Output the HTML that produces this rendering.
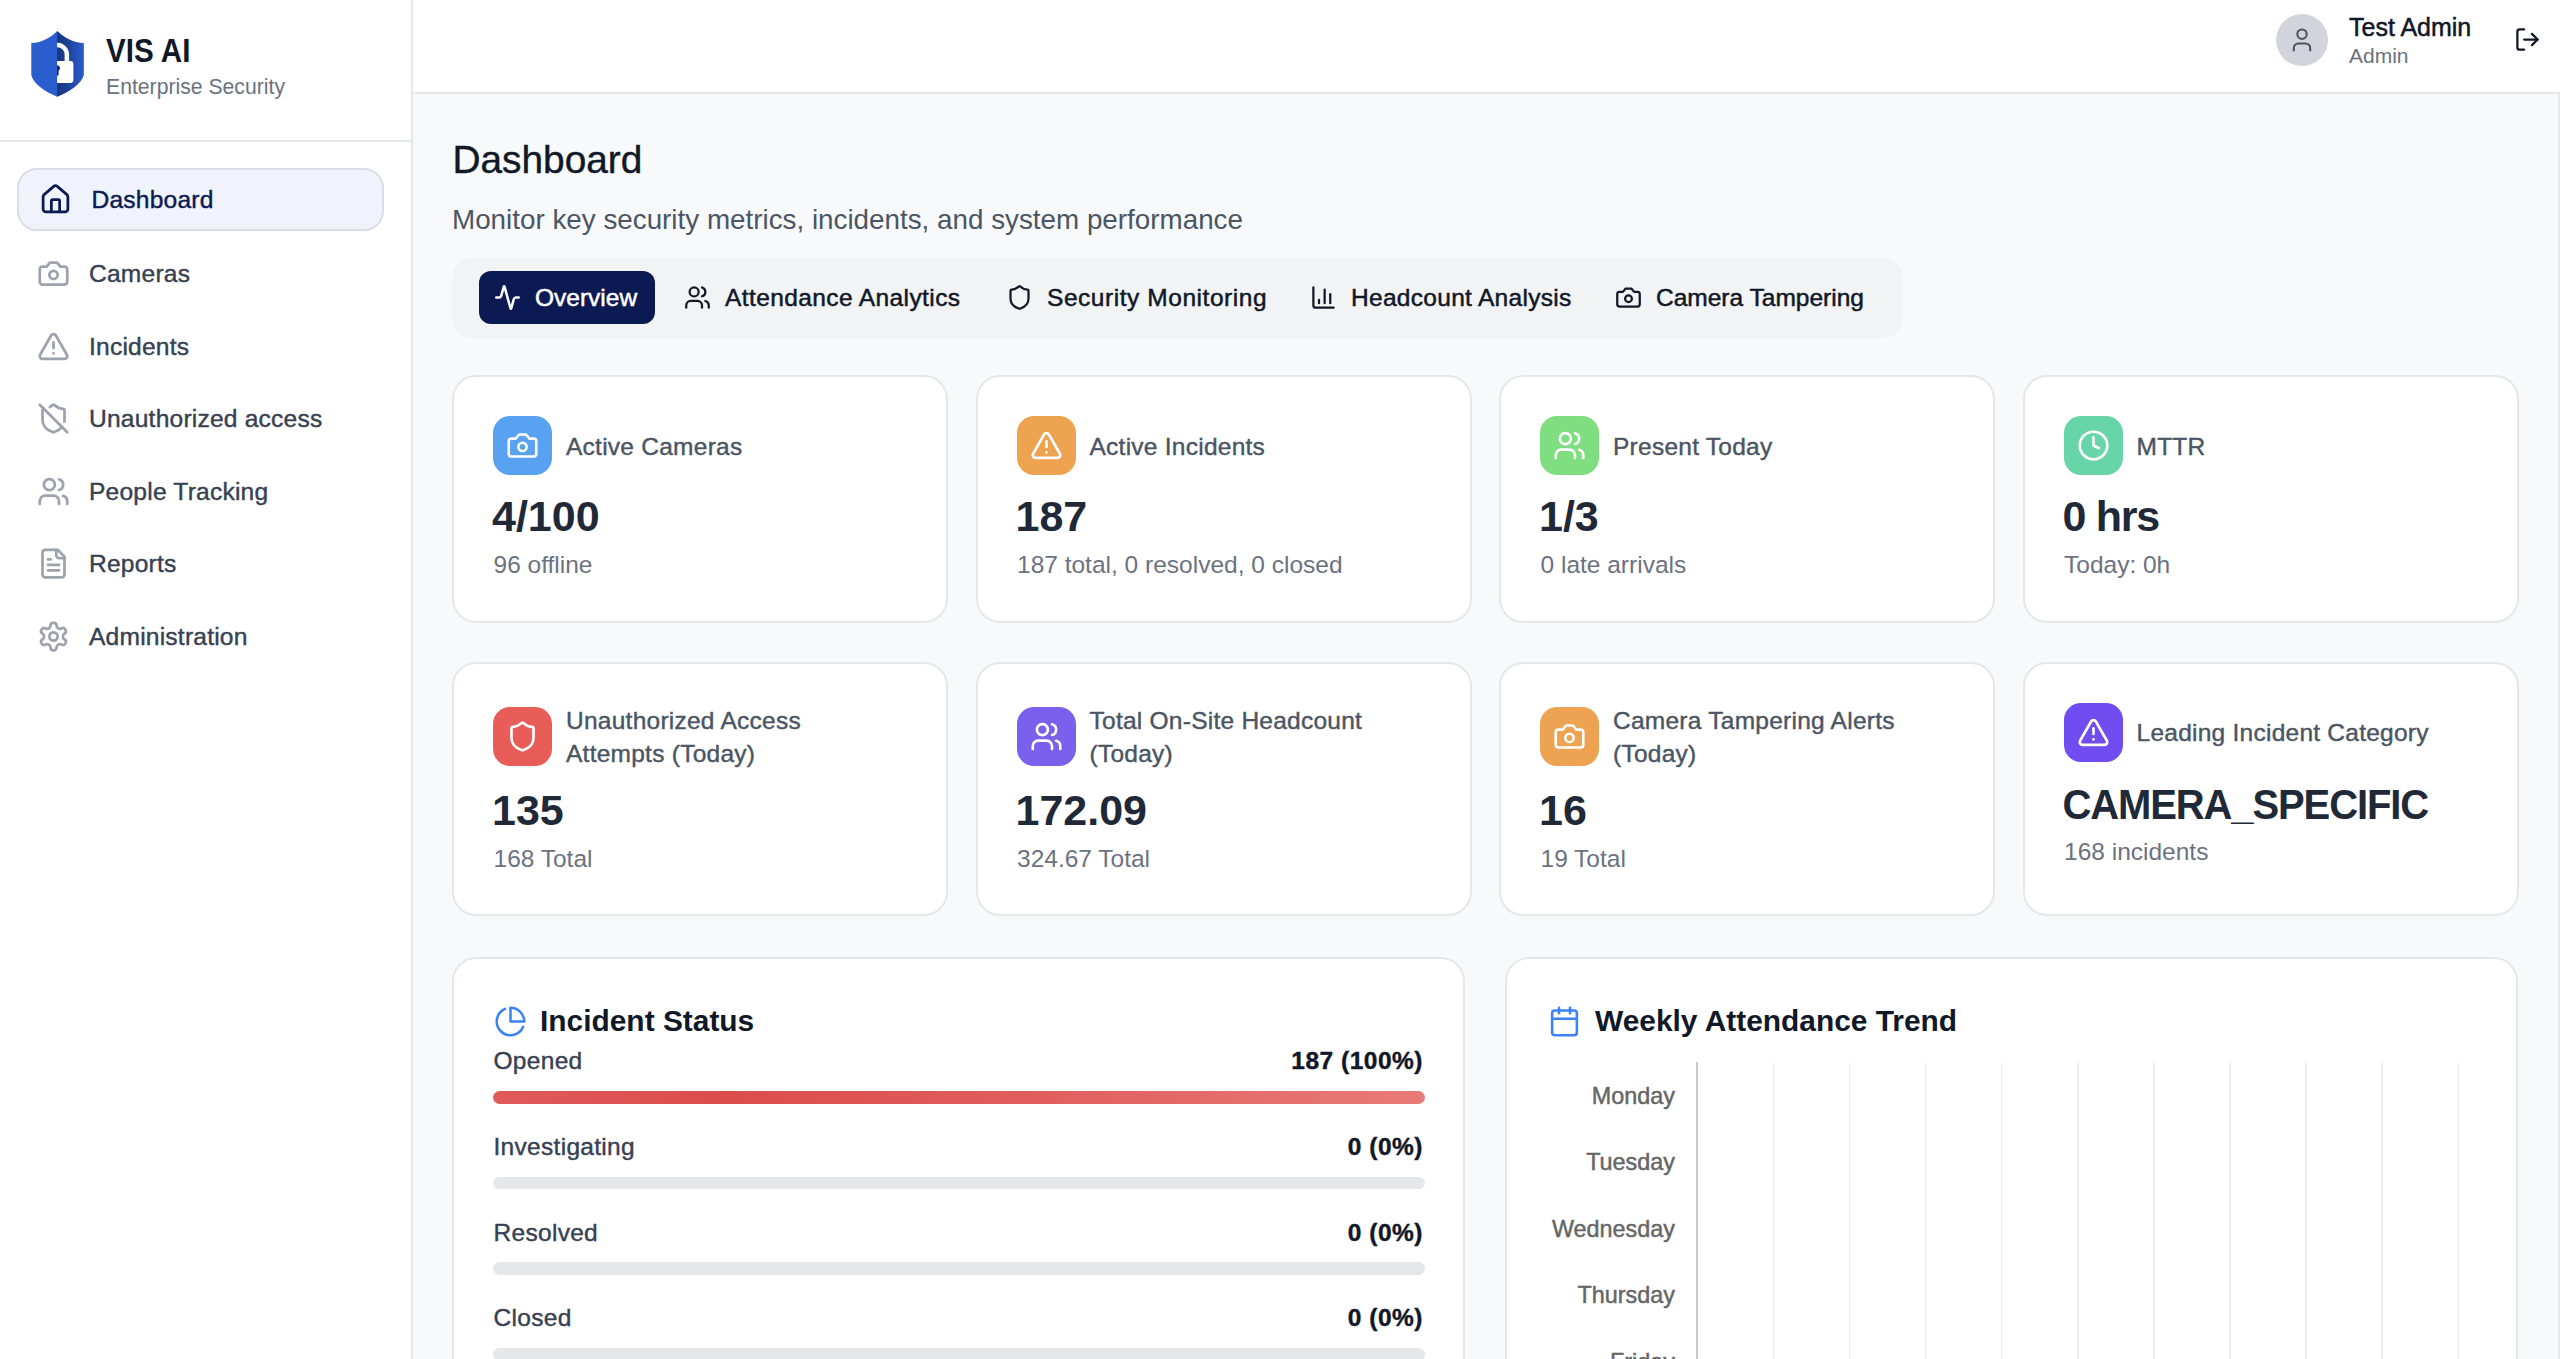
<!DOCTYPE html>
<html><head><meta charset="utf-8">
<style>
*{box-sizing:border-box;margin:0;padding:0}
html,body{width:2560px;height:1359px;overflow:hidden;background:#f8f9fb;font-family:"Liberation Sans",sans-serif;font-variant-ligatures:none}
.abs{position:absolute}
svg{display:block}
.ln{fill:none;stroke:currentColor;stroke-width:2;stroke-linecap:round;stroke-linejoin:round}
.med{-webkit-text-stroke:0.42px currentColor}
#side{position:absolute;left:0;top:0;width:413px;height:1359px;background:#fff;border-right:2px solid #e5e7eb}
#logo{position:absolute;left:0;top:0;width:411.2px;height:142px;border-bottom:2px solid #e5e7eb}
.nav{position:absolute;left:17px;width:366px;height:62px;border-radius:20px;color:#374151}
.nav.act{background:#f0f3fc;border:2px solid #d9dde6;color:#0b1a52;left:16.5px;width:367px;height:62.5px}
.nav svg{position:absolute;left:20px;top:14px;width:33px;height:33px;color:#9ca3af}
.nav.act svg{color:#0b1a52;left:20.5px;top:12.5px}
.nav span{position:absolute;left:72px;top:0;line-height:62px;font-size:24.6px;white-space:nowrap;letter-spacing:0.2px}
#hdr{position:absolute;left:413px;top:0;width:2147px;height:93.5px;background:#fff;border-bottom:2px solid #e5e7eb}
#sb{position:absolute;left:2558px;top:93.5px;width:2px;height:1266px;background:#e8e8e8}

#tabs{position:absolute;left:452px;top:257.5px;width:1451px;height:80px;border-radius:20px;background:#f2f3f5}
.tab{position:absolute;top:271px;height:53px;color:#111827;font-size:24.5px;white-space:nowrap}
.tab svg{position:absolute;top:13px;width:27px;height:27px}
.tab span{position:absolute;top:0;line-height:53px;-webkit-text-stroke:0.5px currentColor}
.tab.act{background:#0b1a52;border-radius:12px;color:#fff}
.card{position:absolute;background:#fff;border:2px solid #e6e7eb;border-radius:24px;width:496px}
.ib{position:absolute;left:39px;width:59px;height:59px;border-radius:17px}
.ib svg{position:absolute;left:13px;top:13px;width:33px;height:33px;color:#fff;stroke-width:1.9}
.lbl{position:absolute;left:112px;font-size:24.5px;line-height:33.5px;color:#4b5563;white-space:nowrap;letter-spacing:0.25px}
.val{position:absolute;left:38px;font-size:43px;line-height:60px;font-weight:bold;color:#1f2937;white-space:nowrap}
.sub{position:absolute;left:39.5px;font-size:24.5px;line-height:34px;color:#6b7280;white-space:nowrap}
.panel{position:absolute;top:957px;height:500px;background:#fff;border:2px solid #e6e7eb;border-radius:24px;width:1013px}
.ptitle{position:absolute;left:86px;top:42px;font-size:29.9px;line-height:40px;font-weight:bold;color:#111827;white-space:nowrap}
.pic{position:absolute;left:40px;top:46px;width:33px;height:33px;color:#3b82f6;stroke-width:1.85}
.srow{position:absolute;left:38px;width:931px}
.srow .l{position:absolute;left:1.5px;top:0;font-size:24.5px;line-height:34px;color:#374151;letter-spacing:0.3px}
.srow .r{position:absolute;right:0;top:0;font-size:24.5px;line-height:34px;color:#111827;font-weight:bold;letter-spacing:0.5px}
.srow .bar{position:absolute;left:1px;top:46.5px;width:931.5px;height:12.8px;border-radius:7px;background:#e5e7eb}
.day{position:absolute;right:0;font-family:"Liberation Sans",sans-serif;font-size:23.4px;-webkit-text-stroke:0.45px #666;color:#666;white-space:nowrap;line-height:30px}
</style></head><body>
<div id="side">
  <div id="logo">
    <svg class="abs" style="left:26px;top:26px" width="64" height="76" viewBox="26 26 64 76">
      <defs><linearGradient id="sg" x1="0" x2="1" y1="0" y2="0"><stop offset="0" stop-color="#17377f"/><stop offset=".35" stop-color="#1c3f93"/><stop offset="1" stop-color="#2b5dd0"/></linearGradient></defs>
      <path d="M57.3 31 C51 37,42 43.1,31.3 43.1 L31.3 75 C33 84,46 92,57.3 96.8 C68.6 92,81.6 84,83.6 75 L83.6 43.1 C72.6 43.1,63.6 37,57.3 31 Z" fill="#2a5dcd"/>
      <path d="M57.1 31.2 C63.6 37,72.6 43.1,83.6 43.1 L83.6 75 C81.6 84,68.6 92,57.1 96.6 Z" fill="url(#sg)"/>
      <path d="M57.1 42.8 A11.8 11.8 0 0 1 69.1 54.6 L69.1 61.5 L64.6 61.5 L64.6 54.6 A7.3 7.3 0 0 0 57.1 47.3 Z" fill="#fff"/>
      <path d="M57.1 61 L70.4 61 A3 3 0 0 1 73.4 64 L73.4 80.1 A3 3 0 0 1 70.4 83.1 L57.1 83.1 Z" fill="#fff"/>
      <path d="M57 65.2 A3 3 0 0 1 59.4 70 L58.6 71 L58.6 75.5 L57 75.5 Z" fill="#10296b"/>
    </svg>
    <div class="abs" style="left:106px;top:31.5px;font-size:29.6px;line-height:40px;font-weight:bold;color:#111827;transform:scaleY(1.12);transform-origin:0 32px">VIS AI</div>
    <div class="abs" style="left:106px;top:73px;font-size:21.2px;line-height:28px;color:#6b7280">Enterprise Security</div>
  </div>
  <div class="nav act" style="top:168px">
    <svg viewBox="0 0 24 24" class="ln"><path d="M15 21v-8a1 1 0 0 0-1-1h-4a1 1 0 0 0-1 1v8"/><path d="M3 10a2 2 0 0 1 .709-1.528l7-5.999a2 2 0 0 1 2.582 0l7 5.999A2 2 0 0 1 21 10v9a2 2 0 0 1-2 2H5a2 2 0 0 1-2-2z"/></svg>
    <span class="med" style="left:73px;line-height:59px">Dashboard</span>
  </div>
  <div class="nav" style="top:243px">
    <svg viewBox="0 0 24 24" class="ln"><path d="M14.5 4h-5L7 7H4a2 2 0 0 0-2 2v9a2 2 0 0 0 2 2h16a2 2 0 0 0 2-2V9a2 2 0 0 0-2-2h-3l-2.5-3z"/><circle cx="12" cy="13" r="3"/></svg>
    <span class="med">Cameras</span>
  </div>
  <div class="nav" style="top:315.6px">
    <svg viewBox="0 0 24 24" class="ln"><path d="m21.73 18-8-14a2 2 0 0 0-3.48 0l-8 14A2 2 0 0 0 4 21h16a2 2 0 0 0 1.73-3"/><path d="M12 9v4"/><path d="M12 17h.01"/></svg>
    <span class="med">Incidents</span>
  </div>
  <div class="nav" style="top:388.2px">
    <svg viewBox="0 0 24 24" class="ln"><path d="m2 2 20 20"/><path d="M5 5a1 1 0 0 0-1 1v7c0 5 3.5 7.5 7.67 8.94a1 1 0 0 0 .67.01c2.35-.82 4.42-2.07 5.91-3.89"/><path d="M9.309 3.652A12.252 12.252 0 0 0 11.24 2.28a1.17 1.17 0 0 1 1.52 0C14.51 3.81 17 5 19 5a1 1 0 0 1 1 1v7a9.784 9.784 0 0 1-.08 1.264"/></svg>
    <span class="med">Unauthorized access</span>
  </div>
  <div class="nav" style="top:460.8px">
    <svg viewBox="0 0 24 24" class="ln"><path d="M16 21v-2a4 4 0 0 0-4-4H6a4 4 0 0 0-4 4v2"/><circle cx="9" cy="7" r="4"/><path d="M22 21v-2a4 4 0 0 0-3-3.87"/><path d="M16 3.13a4 4 0 0 1 0 7.75"/></svg>
    <span class="med">People Tracking</span>
  </div>
  <div class="nav" style="top:533.4px">
    <svg viewBox="0 0 24 24" class="ln"><path d="M15 2H6a2 2 0 0 0-2 2v16a2 2 0 0 0 2 2h12a2 2 0 0 0 2-2V7Z"/><path d="M14 2v4a2 2 0 0 0 2 2h4"/><path d="M10 9H8"/><path d="M16 13H8"/><path d="M16 17H8"/></svg>
    <span class="med">Reports</span>
  </div>
  <div class="nav" style="top:606px">
    <svg viewBox="0 0 24 24" class="ln"><path d="M12.22 2h-.44a2 2 0 0 0-2 2v.18a2 2 0 0 1-1 1.730l-.43.25a2 2 0 0 1-2 0l-.15-.08a2 2 0 0 0-2.73.73l-.22.38a2 2 0 0 0 .73 2.73l.15.1a2 2 0 0 1 1 1.72v.51a2 2 0 0 1-1 1.74l-.15.09a2 2 0 0 0-.73 2.73l.22.38a2 2 0 0 0 2.73.73l.15-.08a2 2 0 0 1 2 0l.43.25a2 2 0 0 1 1 1.73V20a2 2 0 0 0 2 2h.44a2 2 0 0 0 2-2v-.18a2 2 0 0 1 1-1.73l.43-.25a2 2 0 0 1 2 0l.15.08a2 2 0 0 0 2.73-.73l.22-.39a2 2 0 0 0-.73-2.73l-.15-.08a2 2 0 0 1-1-1.74v-.5a2 2 0 0 1 1-1.74l.15-.09a2 2 0 0 0 .73-2.73l-.22-.38a2 2 0 0 0-2.73-.73l-.15.08a2 2 0 0 1-2 0l-.43-.25a2 2 0 0 1-1-1.73V4a2 2 0 0 0-2-2z"/><circle cx="12" cy="12" r="3"/></svg>
    <span class="med">Administration</span>
  </div>
</div>

<div id="hdr">
  <div class="abs" style="left:1863px;top:14px;width:52px;height:52px;border-radius:50%;background:#d1d5db">
    <svg viewBox="0 0 24 24" class="ln abs" style="left:12px;top:12px;width:28px;height:28px;color:#4b5563;stroke-width:1.8"><path d="M19 21v-2a4 4 0 0 0-4-4H9a4 4 0 0 0-4 4v2"/><circle cx="12" cy="7" r="4"/></svg>
  </div>
  <div class="abs" style="-webkit-text-stroke:0.5px currentColor;left:1936px;top:12px;font-size:25px;line-height:30px;color:#111827;white-space:nowrap">Test Admin</div>
  <div class="abs" style="left:1936px;top:42px;font-size:21px;line-height:28px;color:#6b7280">Admin</div>
  <svg viewBox="0 0 24 24" class="ln abs" style="left:2101px;top:26px;width:27px;height:27px;color:#111827"><path d="M9 21H5a2 2 0 0 1-2-2V5a2 2 0 0 1 2-2h4"/><polyline points="16 17 21 12 16 7"/><line x1="21" x2="9" y1="12" y2="12"/></svg>
</div>

<div id="sb"></div>
<!-- MAIN -->
<div id="main">
  <div class="abs med" style="left:452.5px;top:135px;font-size:38.8px;line-height:50px;color:#111827">Dashboard</div>
  <div class="abs" style="left:452px;top:202px;font-size:27.8px;line-height:36px;color:#4b5563;white-space:nowrap">Monitor key security metrics, incidents, and system performance</div>
  <div id="tabs"></div>
  <div class="tab act" style="left:479px;width:176px">
    <svg viewBox="0 0 24 24" class="ln" style="left:15px;stroke-width:2.2"><path d="M22 12h-2.48a2 2 0 0 0-1.93 1.46l-2.35 8.36a.25.25 0 0 1-.48 0L9.24 2.18a.25.25 0 0 0-.48 0l-2.35 8.36A2 2 0 0 1 4.49 12H2"/></svg>
    <span class="med" style="left:56px">Overview</span>
  </div>
  <div class="tab" style="left:670px;width:300px">
    <svg viewBox="0 0 24 24" class="ln" style="left:14px"><path d="M16 21v-2a4 4 0 0 0-4-4H6a4 4 0 0 0-4 4v2"/><circle cx="9" cy="7" r="4"/><path d="M22 21v-2a4 4 0 0 0-3-3.87"/><path d="M16 3.13a4 4 0 0 1 0 7.75"/></svg>
    <span class="med" style="left:55px;letter-spacing:0.4px">Attendance Analytics</span>
  </div>
  <div class="tab" style="left:992px;width:290px">
    <svg viewBox="0 0 24 24" class="ln" style="left:14px"><path d="M20 13c0 5-3.5 7.5-7.66 8.95a1 1 0 0 1-.67-.01C7.5 20.5 4 18 4 13V6a1 1 0 0 1 1-1c2 0 4.5-1.2 6.24-2.72a1.17 1.17 0 0 1 1.52 0C14.51 3.81 17 5 19 5a1 1 0 0 1 1 1z"/></svg>
    <span class="med" style="left:55px;letter-spacing:0.55px">Security Monitoring</span>
  </div>
  <div class="tab" style="left:1296px;width:290px">
    <svg viewBox="0 0 24 24" class="ln" style="left:14px"><path d="M3 3v16a2 2 0 0 0 2 2h16"/><path d="M18 17V9"/><path d="M13 17V5"/><path d="M8 17v-3"/></svg>
    <span class="med" style="left:55px;letter-spacing:0.3px">Headcount Analysis</span>
  </div>
  <div class="tab" style="left:1601px;width:290px">
    <svg viewBox="0 0 24 24" class="ln" style="left:14px"><path d="M14.5 4h-5L7 7H4a2 2 0 0 0-2 2v9a2 2 0 0 0 2 2h16a2 2 0 0 0 2-2V9a2 2 0 0 0-2-2h-3l-2.5-3z"/><circle cx="12" cy="13" r="3"/></svg>
    <span class="med" style="left:55px">Camera Tampering</span>
  </div>
  <div class="card" style="left:452px;top:375px;height:248px">
    <div class="ib" style="top:39px;background:#58a2f1"><svg viewBox="0 0 24 24" class="ln"><path d="M14.5 4h-5L7 7H4a2 2 0 0 0-2 2v9a2 2 0 0 0 2 2h16a2 2 0 0 0 2-2V9a2 2 0 0 0-2-2h-3l-2.5-3z"/><circle cx="12" cy="13" r="3"/></svg></div>
    <div class="lbl med" style="top:53px">Active Cameras</div>
    <div class="val" style="top:109px">4/100</div>
    <div class="sub" style="top:171px">96 offline</div>
  </div>
  <div class="card" style="left:975.5px;top:375px;height:248px">
    <div class="ib" style="top:39px;background:#eda350"><svg viewBox="0 0 24 24" class="ln"><path d="m21.73 18-8-14a2 2 0 0 0-3.48 0l-8 14A2 2 0 0 0 4 21h16a2 2 0 0 0 1.73-3"/><path d="M12 9v4"/><path d="M12 17h.01"/></svg></div>
    <div class="lbl med" style="top:53px">Active Incidents</div>
    <div class="val" style="top:109px">187</div>
    <div class="sub" style="top:171px">187 total, 0 resolved, 0 closed</div>
  </div>
  <div class="card" style="left:1499px;top:375px;height:248px">
    <div class="ib" style="top:39px;background:#7ede80"><svg viewBox="0 0 24 24" class="ln"><path d="M16 21v-2a4 4 0 0 0-4-4H6a4 4 0 0 0-4 4v2"/><circle cx="9" cy="7" r="4"/><path d="M22 21v-2a4 4 0 0 0-3-3.87"/><path d="M16 3.13a4 4 0 0 1 0 7.75"/></svg></div>
    <div class="lbl med" style="top:53px">Present Today</div>
    <div class="val" style="top:109px">1/3</div>
    <div class="sub" style="top:171px">0 late arrivals</div>
  </div>
  <div class="card" style="left:2022.5px;top:375px;height:248px">
    <div class="ib" style="top:39px;background:#67d5a8"><svg viewBox="0 0 24 24" class="ln"><circle cx="12" cy="12" r="10"/><polyline points="12 6 12 12 16 14"/></svg></div>
    <div class="lbl med" style="top:53px">MTTR</div>
    <div class="val" style="top:109px;letter-spacing:-1.3px">0 hrs</div>
    <div class="sub" style="top:171px">Today: 0h</div>
  </div>
  <div class="card" style="left:452px;top:662px;height:254px">
    <div class="ib" style="top:42.5px;background:#e95d58"><svg viewBox="0 0 24 24" class="ln"><path d="M20 13c0 5-3.5 7.5-7.66 8.95a1 1 0 0 1-.67-.01C7.5 20.5 4 18 4 13V6a1 1 0 0 1 1-1c2 0 4.5-1.2 6.24-2.72a1.17 1.17 0 0 1 1.52 0C14.51 3.81 17 5 19 5a1 1 0 0 1 1 1z"/></svg></div>
    <div class="lbl med" style="top:39.5px">Unauthorized Access<br>Attempts (Today)</div>
    <div class="val" style="top:116px">135</div>
    <div class="sub" style="top:178px">168 Total</div>
  </div>
  <div class="card" style="left:975.5px;top:662px;height:254px">
    <div class="ib" style="top:42.5px;background:#7b60ee"><svg viewBox="0 0 24 24" class="ln"><path d="M16 21v-2a4 4 0 0 0-4-4H6a4 4 0 0 0-4 4v2"/><circle cx="9" cy="7" r="4"/><path d="M22 21v-2a4 4 0 0 0-3-3.87"/><path d="M16 3.13a4 4 0 0 1 0 7.75"/></svg></div>
    <div class="lbl med" style="top:39.5px">Total On-Site Headcount<br>(Today)</div>
    <div class="val" style="top:116px">172.09</div>
    <div class="sub" style="top:178px">324.67 Total</div>
  </div>
  <div class="card" style="left:1499px;top:662px;height:254px">
    <div class="ib" style="top:42.5px;background:#eda352"><svg viewBox="0 0 24 24" class="ln"><path d="M14.5 4h-5L7 7H4a2 2 0 0 0-2 2v9a2 2 0 0 0 2 2h16a2 2 0 0 0 2-2V9a2 2 0 0 0-2-2h-3l-2.5-3z"/><circle cx="12" cy="13" r="3"/></svg></div>
    <div class="lbl med" style="top:39.5px">Camera Tampering Alerts<br>(Today)</div>
    <div class="val" style="top:116px">16</div>
    <div class="sub" style="top:178px">19 Total</div>
  </div>
  <div class="card" style="left:2022.5px;top:662px;height:254px">
    <div class="ib" style="top:38.5px;background:#704df0"><svg viewBox="0 0 24 24" class="ln"><path d="m21.73 18-8-14a2 2 0 0 0-3.48 0l-8 14A2 2 0 0 0 4 21h16a2 2 0 0 0 1.73-3"/><path d="M12 9v4"/><path d="M12 17h.01"/></svg></div>
    <div class="lbl med" style="top:52px">Leading Incident Category</div>
    <div class="val" style="top:110.5px;font-size:40px;letter-spacing:-1.12px;transform:scaleY(1.07);transform-origin:0 45px">CAMERA_SPECIFIC</div>
    <div class="sub" style="top:171px">168 incidents</div>
  </div>
  <div class="panel" style="left:452px">
    <svg viewBox="0 0 24 24" class="ln pic"><path d="M21.21 15.89A10 10 0 1 1 8 2.83"/><path d="M22 12A10 10 0 0 0 12 2v10z"/></svg>
    <div class="ptitle">Incident Status</div>
    <div class="srow med" style="top:85.3px"><div class="l">Opened</div><div class="r">187 (100%)</div><div class="bar" style="background:linear-gradient(90deg,#e05a5a,#dc4c4c 25%,#e0605e 60%,#e87b77)"></div></div>
    <div class="srow med" style="top:171.0px"><div class="l">Investigating</div><div class="r">0 (0%)</div><div class="bar" style=""></div></div>
    <div class="srow med" style="top:256.7px"><div class="l">Resolved</div><div class="r">0 (0%)</div><div class="bar" style=""></div></div>
    <div class="srow med" style="top:342.4px"><div class="l">Closed</div><div class="r">0 (0%)</div><div class="bar" style=""></div></div>
  </div>
  <div class="panel" style="left:1505px">
    <svg viewBox="0 0 24 24" class="ln pic" style="left:41px;top:46px"><rect width="18" height="18" x="3" y="4" rx="2" ry="2"/><line x1="16" x2="16" y1="2" y2="6"/><line x1="8" x2="8" y1="2" y2="6"/><line x1="3" x2="21" y1="10" y2="10"/></svg>
    <div class="ptitle" style="left:88px">Weekly Attendance Trend</div>
    <div class="abs" style="left:188.5px;top:103px;width:2px;height:400px;background:#c9c9c9"></div>
    <div class="abs" style="left:265.6px;top:104px;width:1.5px;height:400px;background:#ececec"></div><div class="abs" style="left:341.7px;top:104px;width:1.5px;height:400px;background:#ececec"></div><div class="abs" style="left:417.8px;top:104px;width:1.5px;height:400px;background:#ececec"></div><div class="abs" style="left:493.9px;top:104px;width:1.5px;height:400px;background:#ececec"></div><div class="abs" style="left:570.0px;top:104px;width:1.5px;height:400px;background:#ececec"></div><div class="abs" style="left:646.1px;top:104px;width:1.5px;height:400px;background:#ececec"></div><div class="abs" style="left:722.2px;top:104px;width:1.5px;height:400px;background:#ececec"></div><div class="abs" style="left:798.3px;top:104px;width:1.5px;height:400px;background:#ececec"></div><div class="abs" style="left:874.4px;top:104px;width:1.5px;height:400px;background:#ececec"></div><div class="abs" style="left:950.5px;top:104px;width:1.5px;height:400px;background:#ececec"></div>
    <div class="day" style="top:121.5px;right:841px">Monday</div><div class="day" style="top:188.0px;right:841px">Tuesday</div><div class="day" style="top:254.5px;right:841px">Wednesday</div><div class="day" style="top:321.0px;right:841px">Thursday</div><div class="day" style="top:387.5px;right:841px">Friday</div>
  </div>
</div>
</body></html>
